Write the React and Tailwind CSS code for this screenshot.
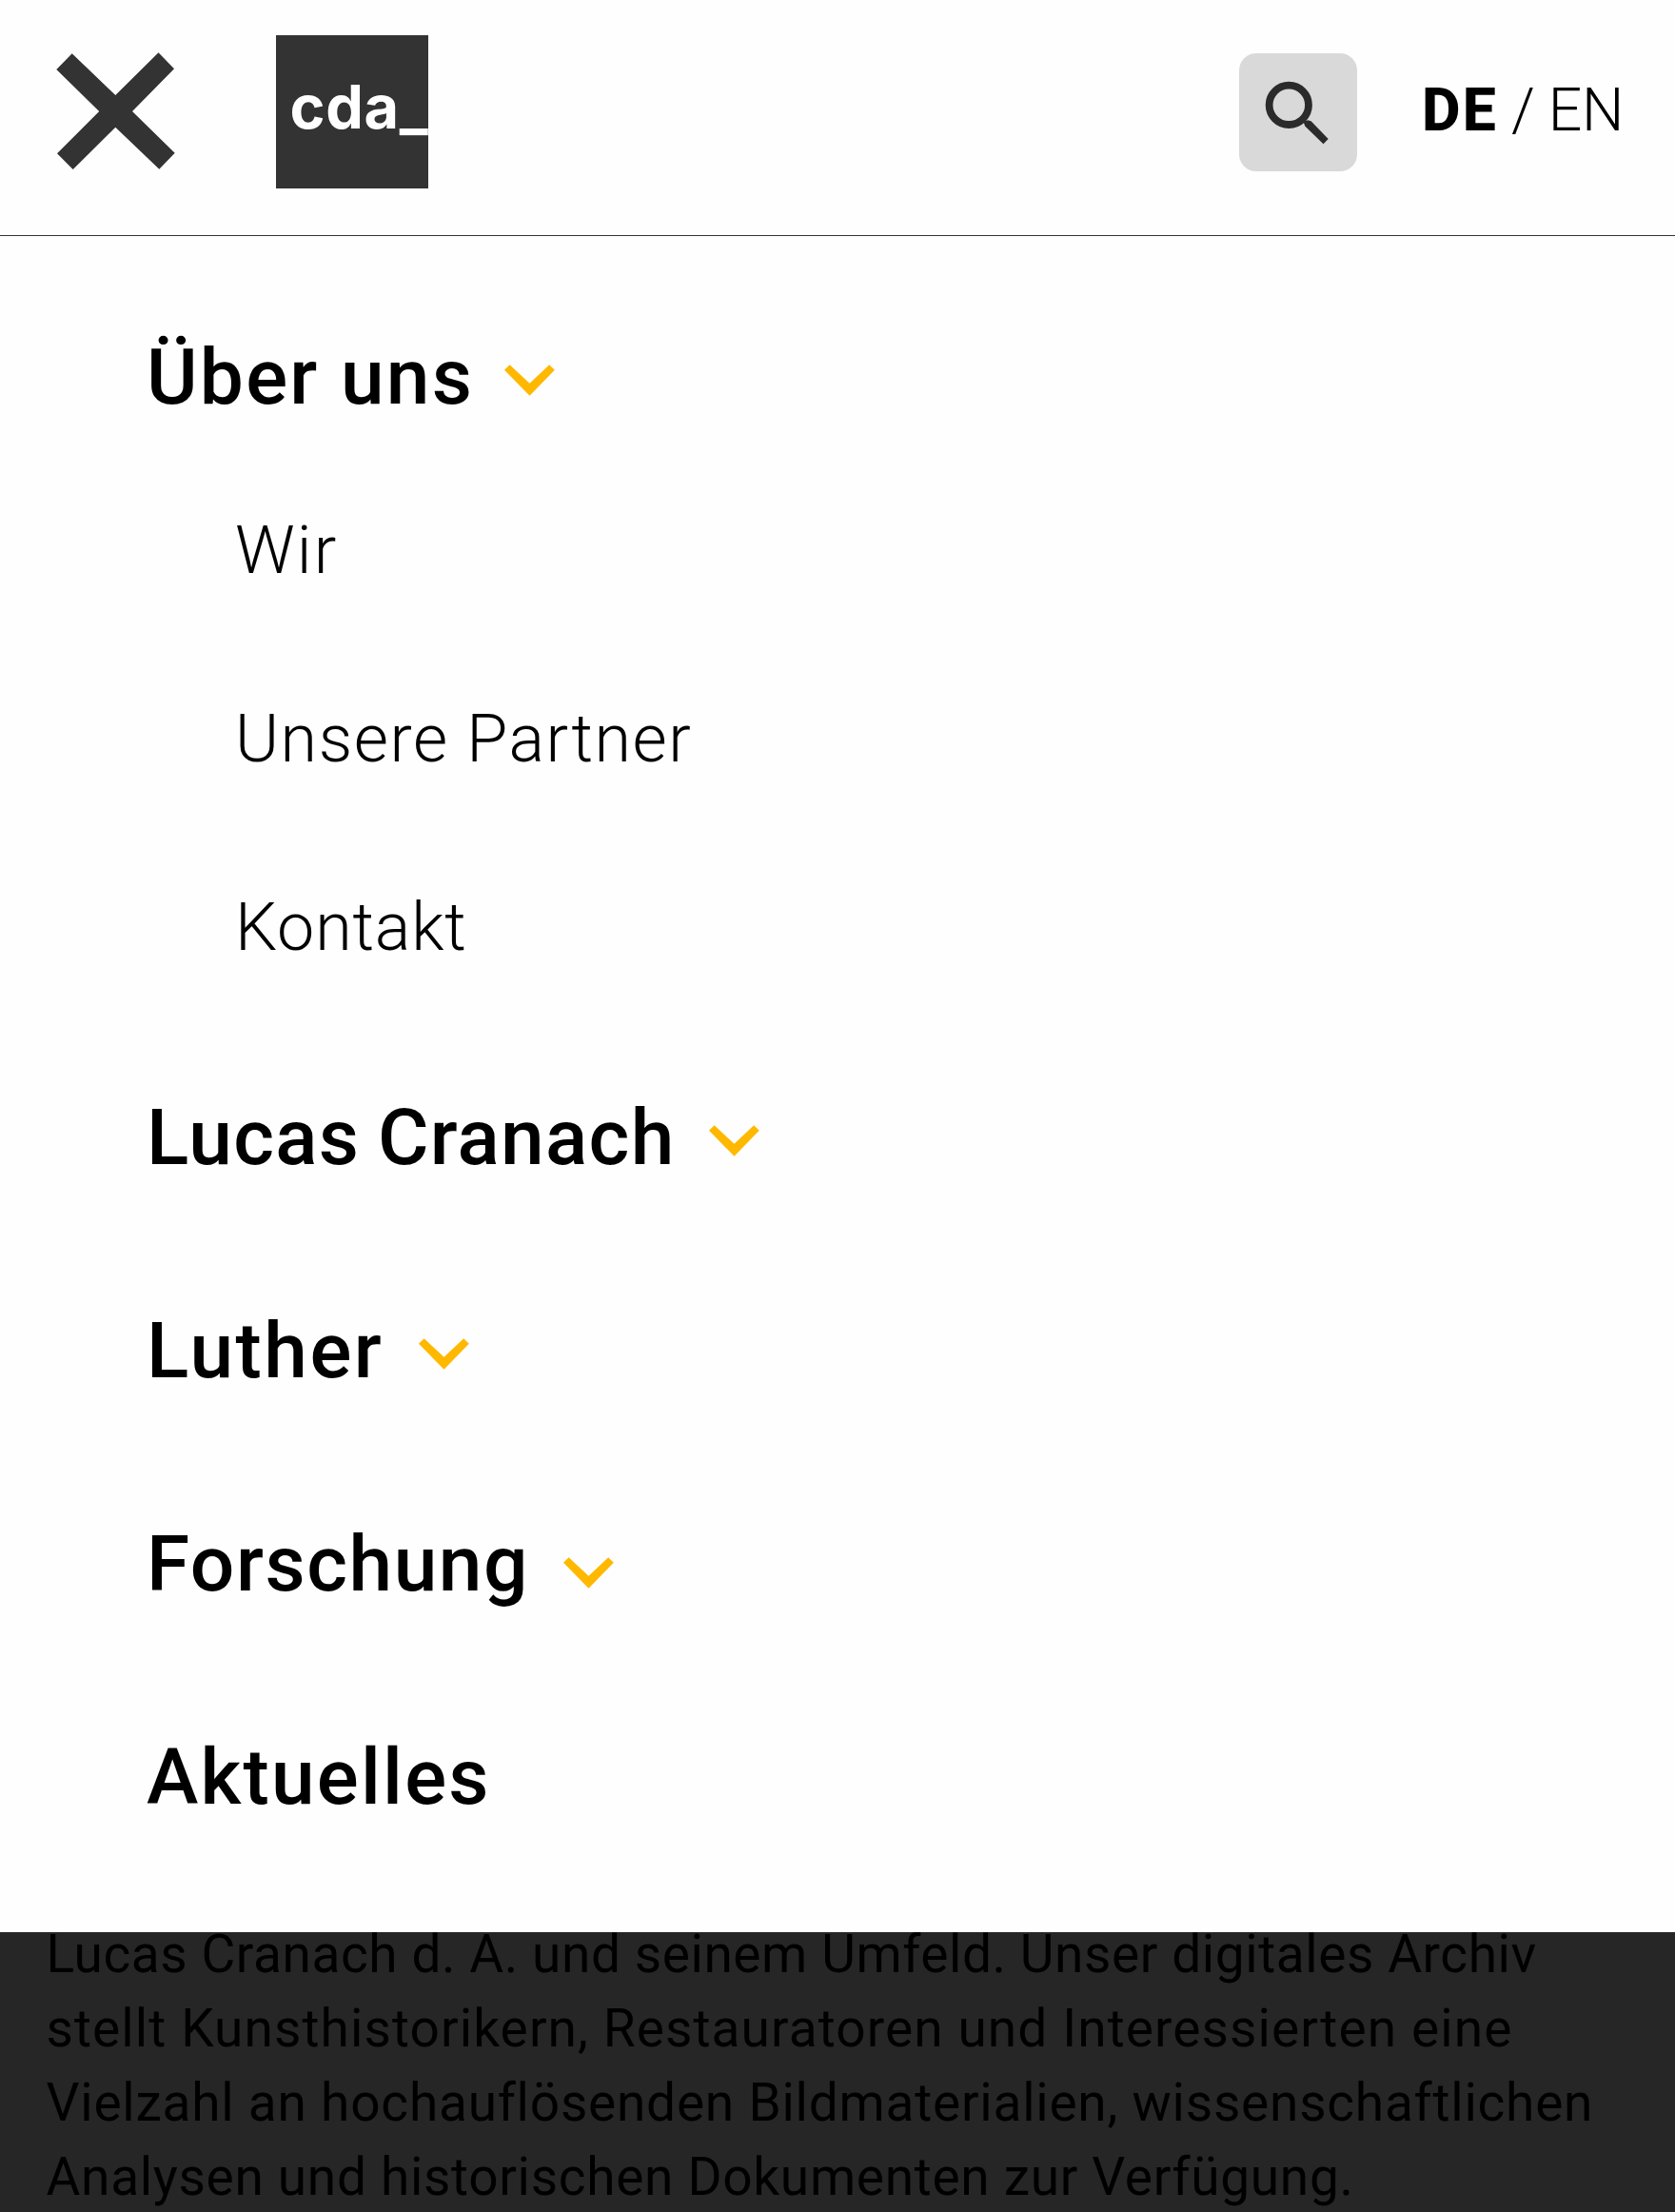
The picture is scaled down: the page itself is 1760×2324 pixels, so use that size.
const subItems = [
  { label: "Wir", tracking: "tracking-[2.1px]" },
  { label: "Unsere Partner", tracking: "tracking-[1.55px]" },
  { label: "Kontakt", tracking: "tracking-[0.82px]" },
];

const mainItems = [
  { label: "Lucas Cranach", tracking: "tracking-[1.3px] [word-spacing:-3px]", chevron: "ml-[35px] mt-[6px]" },
  { label: "Luther", tracking: "tracking-[2.5px]", chevron: "ml-[37px] mt-[6px]" },
  { label: "Forschung", tracking: "tracking-[1.55px]", chevron: "ml-[36px] mt-[18px]" },
  { label: "Aktuelles", tracking: "tracking-[2.2px]" },
];

const intro = [
  { text: "Lucas Cranach d. A. und seinem Umfeld. Unser digitales Archiv", tracking: "tracking-[0.58px]" },
  { text: "stellt Kunsthistorikern, Restauratoren und Interessierten eine", tracking: "tracking-[1.1px]" },
  { text: "Vielzahl an hochauflösenden Bildmaterialien, wissenschaftlichen", tracking: "tracking-[0.77px]" },
  { text: "Analysen und historischen Dokumenten zur Verfügung.", tracking: "tracking-[0.69px]" },
];

function Chevron({ className }) {
  return (
    <svg className={`h-[33px] w-[53px] shrink-0 ${className}`} viewBox="0 0 53 33" fill="#ffb800" aria-hidden="true">
      <path d="M5.6 0.2 26.5 19.8 47.2 0.2 52.8 5.8 26.5 32.8 0 5.8Z" />
    </svg>
  );
}

function CloseIcon() {
  return (
    <svg className="h-[123px] w-[125px]" viewBox="0 0 125 123" fill="#333333" aria-hidden="true">
      <path d="M16.7 1.3 62.3 45 107.5 0.3 124 17.3 80 62 124.7 105.7 108.3 122.7 62.3 78.8 17.7 123 1 106.3 45.2 62 0.3 18Z" />
    </svg>
  );
}

function SearchIcon() {
  return (
    <svg className="h-[124px] w-[124px]" viewBox="0 0 124 124" fill="none" aria-hidden="true">
      <circle cx="52.3" cy="54.3" r="20.7" stroke="#2b2b2b" strokeWidth="7.8" />
      <path d="M67.5 72 72.2 70.2 75.6 71.2 93.7 90 88.5 95.2 69.4 76.7Z" fill="#2b2b2b" />
    </svg>
  );
}

export default function App() {
  return (
    <div className="flex h-[2324px] w-[1760px] flex-col overflow-hidden bg-[#262626] font-['Roboto',sans-serif] text-black">
      <div className="h-[2030px] shrink-0 bg-[#fefefe]">
        <header className="h-[248px] border-b border-[#333333]">
          <div className="flex h-[235px] items-center pl-[59px]">
            <button className="mb-[2px]" aria-label="Menü schließen">
              <CloseIcon />
            </button>
            <div className="ml-[106px] h-[161px] w-[160px] overflow-hidden bg-[#333333] pl-[14.5px] font-['Inter',sans-serif] text-[63px] leading-[151px] font-bold tracking-[0.6px] whitespace-nowrap text-white">
              cda_
            </div>
            <button className="ml-[852px] rounded-[18px] bg-[#d9d9d9]" aria-label="Suche">
              <SearchIcon />
            </button>
            <div className="mb-[3px] ml-[68px] flex text-[62.5px] leading-none">
              <span className="font-extrabold tracking-[2.2px]">DE</span>
              <span className="ml-[14px] font-light">/</span>
              <span className="ml-[14px] font-light tracking-[-0.5px]">EN</span>
            </div>
          </div>
        </header>

        <nav className="pt-16 pl-[154px]">
          <div className="flex h-[167px] items-center">
            <span className="text-[82px] leading-none font-medium tracking-[2.2px]">Über uns</span>
            <Chevron className="mt-[8px] ml-[32px]" />
          </div>
          <ul className="mb-[10px] pl-[93px]">
            {subItems.map((item) => (
              <li key={item.label} className={`h-[198px] text-[70px] leading-[198px] font-light ${item.tracking}`}>
                {item.label}
              </li>
            ))}
          </ul>
          {mainItems.map((item) => (
            <div key={item.label} className="flex h-[224px] items-center">
              <span className={`text-[82px] leading-none font-medium ${item.tracking}`}>{item.label}</span>
              {item.chevron && <Chevron className={item.chevron} />}
            </div>
          ))}
        </nav>
      </div>

      <div className="h-[294px] overflow-hidden pl-[48.5px]">
        <p className="-mt-[16px] text-[55px] leading-[78px] whitespace-nowrap">
          {intro.map((line) => (
            <span key={line.text} className={`block ${line.tracking}`}>
              {line.text}
            </span>
          ))}
        </p>
      </div>
    </div>
  );
}
